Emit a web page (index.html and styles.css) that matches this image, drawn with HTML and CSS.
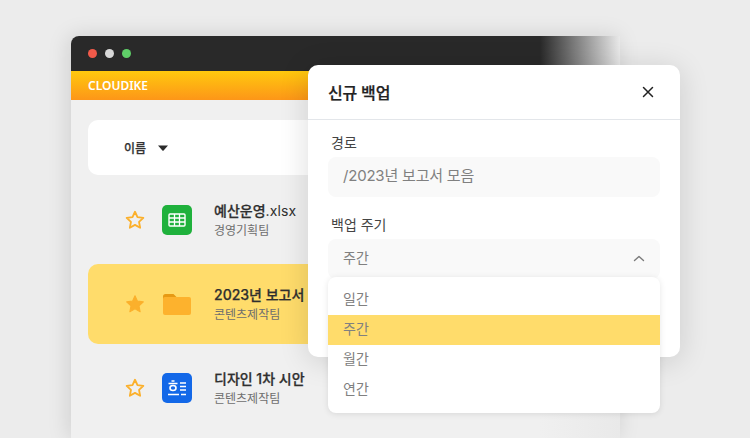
FILE: index.html
```html
<!DOCTYPE html>
<html lang="ko">
<head>
<meta charset="utf-8">
<title>Cloudike</title>
<link rel="stylesheet" href="styles.css">
</head>
<body>
<div class="stage">
  <div class="window">
    <div class="titlebar">
      <span class="dot dot-red"></span><span class="dot dot-grey"></span><span class="dot dot-green"></span>
    </div>
    <div class="brandbar">CLOUDIKE</div>
    <div class="content">
      <div class="head-card">
        <span class="head-label">이름</span>
        <svg class="caret" width="10" height="6" viewBox="0 0 10 6"><path d="M0 0.5h10L5.6 5.4a.8.8 0 0 1-1.2 0z" fill="#2b2b2b"/></svg>
      </div>
      <div class="row">
        <svg class="star" width="22" height="22" viewBox="0 0 24 24"><path d="M12 3l2.7 5.900 6.400.8-4.700 4.400 1.200 6.400L12 17.300l-5.600 3.200 1.200-6.400-4.700-4.400 6.400-.8z" fill="none" stroke="#fbb02c" stroke-width="2" stroke-linejoin="round"/></svg>
        <span class="tile tile-green">
          <svg width="18" height="14" viewBox="0 0 18 14"><rect x="1" y="1" width="16" height="12" rx="1" fill="none" stroke="#fff" stroke-width="1.400"/><path d="M1 5h16M1 9h16M6.500 1v12M11.500 1v12" stroke="#fff" stroke-width="1.300"/></svg>
        </span>
        <div class="meta"><div class="name">예산운영<span class="ext">.xlsx</span></div><div class="team">경영기획팀</div></div>
      </div>
      <div class="row row-active">
        <svg class="star" width="22" height="22" viewBox="0 0 24 24"><path d="M12 3l2.700 5.900 6.400.8-4.700 4.400 1.200 6.400L12 17.300l-5.600 3.200 1.200-6.400-4.700-4.400 6.400-.8z" fill="#fbb02c" stroke="#fbb02c" stroke-width="1.200" stroke-linejoin="round"/></svg>
        <span class="tile">
          <svg width="30" height="24" viewBox="0 0 30 24"><path d="M1 4.500A2.500 2.500 0 0 1 3.500 2h8l3 3v4H1z" fill="#e79a14"/><rect x="1" y="5" width="28" height="18" rx="2" fill="#fdb22d"/></svg>
        </span>
        <div class="meta"><div class="name">2023년 보고서 모음</div><div class="team">콘텐츠제작팀</div></div>
      </div>
      <div class="row">
        <svg class="star" width="22" height="22" viewBox="0 0 24 24"><path d="M12 3l2.700 5.900 6.400.8-4.700 4.400 1.200 6.400L12 17.300l-5.600 3.200 1.200-6.400-4.700-4.400 6.400-.8z" fill="none" stroke="#fbb02c" stroke-width="2" stroke-linejoin="round"/></svg>
        <span class="tile tile-blue">
          <svg width="20" height="16" viewBox="0 0 20 16" fill="none" stroke="#fff" stroke-width="1.600"><path d="M4.500 1h3M1.500 3.500h9M19 3h-6M19 6.500h-6M19 10h-6M1 14.500h11M14 14.500h5"/><ellipse cx="6" cy="8" rx="3" ry="2.500"/></svg>
        </span>
        <div class="meta"><div class="name">디자인 1차 시안</div><div class="team">콘텐츠제작팀</div></div>
      </div>
    </div>
    <div class="fade"></div>
  </div>

  <div class="modal">
    <div class="modal-head">
      <span class="modal-title">신규 백업</span>
      <svg width="12" height="12" viewBox="0 0 12 12"><path d="M1.500 1.500l9 9M10.500 1.500l-9 9" stroke="#222" stroke-width="1.500" stroke-linecap="round"/></svg>
    </div>
    <div class="modal-body">
      <div class="label">경로</div>
      <div class="field field-path">/2023년 보고서 모음</div>
      <div class="label label-second">백업 주기</div>
      <div class="field field-select">
        <span>주간</span>
        <svg width="12" height="7" viewBox="0 0 12 7"><path d="M1.500 5.500L6 1.500l4.500 4" fill="none" stroke="#7a7a7a" stroke-width="1.400" stroke-linecap="round" stroke-linejoin="round"/></svg>
      </div>
    </div>
  </div>

  <div class="menu">
    <div class="option">일간</div>
    <div class="option option-active">주간</div>
    <div class="option">월간</div>
    <div class="option">연간</div>
  </div>
</div>
</body>
</html>
```
FILE: styles.css
```css
* { box-sizing: border-box; }
html, body { margin: 0; padding: 0; }
body {
  width: 750px;
  height: 438px;
  overflow: hidden;
  background: #ececec;
  font-family: Inter, "Noto Sans CJK KR", "Noto Sans", sans-serif;
  color: #2b2b2b;
}
.stage { position: relative; width: 750px; height: 438px; overflow: hidden; padding: 36px 0 0 71px; }

.window {
  position: relative;
  width: 549px;
  height: 402px;
  border-radius: 8px 0 0 0;
  background: #f0f0f0;
  box-shadow: -2px 0 22px rgba(0, 0, 0, .13);
}
.fade {
  position: absolute;
  top: 0;
  right: 0;
  bottom: 0;
  width: 80px;
  background: linear-gradient(90deg, rgba(236, 236, 236, 0), #e9e9e9);
}
.titlebar {
  height: 35px;
  background: #292929;
  border-radius: 8px 0 0 0;
  display: flex;
  align-items: center;
  gap: 8px;
  padding: 0 0 0 17px;
}
.dot { width: 9px; height: 9px; border-radius: 50%; }
.dot-red { background: #f15a4a; }
.dot-grey { background: #d8d8d8; }
.dot-green { background: #5fd068; }
.brandbar {
  height: 29px;
  background: linear-gradient(180deg, #ffc90e, #fd9618);
  color: #fff;
  font-family: "Noto Sans", sans-serif;
  font-size: 12px;
  font-weight: 600;
  line-height: 29px;
  padding-left: 17px;
}
.content { padding: 20px 0 0 17px; display: flex; flex-direction: column; gap: 4px; }
.head-card {
  height: 55px;
  background: #fff;
  border-radius: 10px;
  display: flex;
  align-items: center;
  gap: 12px;
  padding-left: 36px;
  margin-bottom: 1px;
}
.head-label { font-size: 12px; font-weight: 500; color: #333; -webkit-text-stroke: .25px #333; }
.row {
  height: 80px;
  display: flex;
  align-items: center;
  border-radius: 10px;
  padding-left: 36px;
}
.row-active { background: #ffdc6b; }
.star { flex: none; margin-right: 16px; }
.tile {
  flex: none;
  width: 30px;
  height: 30px;
  border-radius: 5px;
  display: flex;
  align-items: center;
  justify-content: center;
  margin-right: 22px;
}
.tile-green { background: #1fb13c; }
.tile-blue { background: #1368e8; }
.meta { display: flex; flex-direction: column; gap: 3px; white-space: nowrap; }
.name { font-size: 14px; font-weight: 500; line-height: 18px; color: #2f2f2f; -webkit-text-stroke: .25px #2f2f2f; }
.ext { font-weight: 400; -webkit-text-stroke: 0; letter-spacing: .1px; }
.team { font-size: 12px; line-height: 15px; color: #6e6e6e; }

.modal {
  position: absolute;
  left: 308px;
  top: 65px;
  width: 372px;
  height: 292px;
  background: #fff;
  border-radius: 10px;
  box-shadow: 0 4px 30px rgba(0, 0, 0, .14);
}
.modal-head {
  height: 55px;
  border-bottom: 1px solid #e3e6ea;
  display: flex;
  align-items: center;
  justify-content: space-between;
  padding: 0 26px 0 20px;
}
.modal-title { font-size: 16px; font-weight: 500; color: #222; -webkit-text-stroke: .25px #222; letter-spacing: -.2px; }
.modal-body { padding: 13px 20px 0; }
.label { font-size: 14px; line-height: 20px; color: #444; padding-left: 3px; margin-bottom: 4px; }
.label-second { margin-top: 18px; }
.field {
  height: 40px;
  background: #f9f9f9;
  border-radius: 8px;
  font-size: 14px;
  line-height: 38px;
  color: #808080;
  padding: 0 15px;
}
.field-path { font-size: 15px; letter-spacing: -.2px; }
.field-select { display: flex; align-items: center; justify-content: space-between; padding-bottom: 2px; }

.menu {
  position: absolute;
  left: 328px;
  top: 277px;
  width: 332px;
  height: 136px;
  padding: 8px 0;
  background: #fff;
  border-radius: 8px;
  box-shadow: 0 1px 6px rgba(0, 0, 0, .1);
}
.option { height: 30px; line-height: 28px; font-size: 14px; color: #808080; padding-left: 15px; }
.option-active { background: #ffdc6b; }
```
